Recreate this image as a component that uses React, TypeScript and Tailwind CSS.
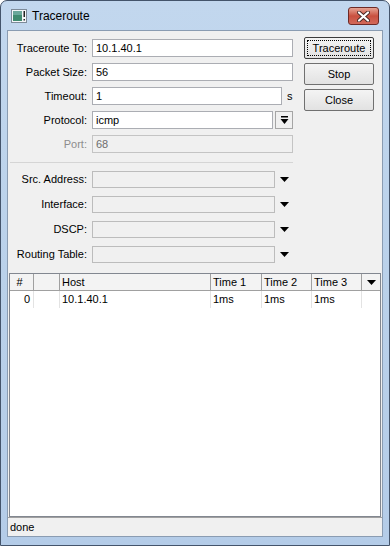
import React from "react";

const font = { fontFamily: '"Liberation Sans", Arial, sans-serif' };

function Field({ label, value, width, disabled, children }: { label: string; value?: string; width: string; disabled?: boolean; children?: React.ReactNode }) {
  return (
    <div className="flex h-[18px] items-center">
      <div className={`w-[79px] shrink-0 text-right text-[11px] ${disabled ? "text-[#8d8d8d]" : "text-black"}`}>{label}:</div>
      <div
        className={`ml-[5px] flex h-[18px] items-center border px-[3px] text-[11px] ${width} ${
          disabled ? "border-[#c4c4c4] bg-[#f0f0f0] text-[#6d6d6d]" : "border-[#abadb3] bg-white text-black"
        }`}
      >
        {value}
      </div>
      {children}
    </div>
  );
}

function DropField({ label }: { label: string }) {
  return (
    <div className="flex h-[17px] items-center">
      <div className="w-[79px] shrink-0 text-right text-[11px] text-black">{label}:</div>
      <div className="ml-[5px] h-[17px] w-[183px] border border-[#bcbcbc] bg-[#f0f0f0]" />
      <svg width="9" height="5" viewBox="0 0 9 5" className="ml-[5px]">
        <path d="M0 0H9L4.5 5Z" fill="#000" />
      </svg>
    </div>
  );
}

function Btn({ label, focused }: { label: string; focused?: boolean }) {
  return (
    <div
      className={`flex h-[22px] w-[70px] items-center justify-center rounded-[2px] border bg-gradient-to-b from-[#f4f4f4] to-[#e2e2e2] text-[11px] ${
        focused ? "border-[#3c3c3c]" : "border-[#707070]"
      }`}
    >
      {focused ? (
        <div className="flex h-[16px] w-[64px] items-center justify-center border border-dotted border-black">{label}</div>
      ) : (
        label
      )}
    </div>
  );
}

const cols = "grid grid-cols-[24px_26px_151px_51px_50px_50px_1fr]";

export default function App() {
  return (
    <div style={font} className="flex h-[546px] w-[390px] flex-col overflow-hidden rounded-t-[7px] border border-[#44546b] bg-gradient-to-b from-[#c2d7ee] via-[#bad1ea] to-[#b4cce8]">
      {/* title bar */}
      <div className="flex h-[29px] shrink-0 items-center pl-[10px] pr-[10px]">
        <svg width="16" height="14" viewBox="0 0 16 14">
          <rect x="0.5" y="0.5" width="15" height="13" fill="#f4f6f8" stroke="#7d8a98" />
          <rect x="2" y="2" width="9" height="10" fill="#3f8a6f" />
          <rect x="2" y="2" width="9" height="4" fill="#6aa79a" />
          <rect x="12.5" y="2" width="1.5" height="6" fill="#222" />
          <rect x="12.5" y="10" width="1.5" height="1.5" fill="#222" />
        </svg>
        <span className="ml-[5px] text-[12px] text-black">Traceroute</span>
        <div className="ml-auto mt-[1px] flex h-[18px] w-[31px] items-center justify-center rounded-[3px] border border-[#6e2a26] bg-gradient-to-b from-[#e5a394] via-[#c9503f] to-[#d2695a]">
          <svg width="13" height="11" viewBox="0 0 13 11">
            <path d="M2 1.5L11 9.5M11 1.5L2 9.5" stroke="#4a2a26" strokeWidth="4" strokeLinecap="round" />
            <path d="M2 1.5L11 9.5M11 1.5L2 9.5" stroke="#fff" strokeWidth="2.2" strokeLinecap="round" />
          </svg>
        </div>
      </div>

      {/* client area */}
      <div className="mx-[6px] flex min-h-0 flex-1 flex-col border border-[#8a9cb2] bg-[#f0f0f0]">
        <div className="flex items-start">
          <div className="flex flex-col gap-[6px] pt-[8px]">
            <Field label="Traceroute To" value="10.1.40.1" width="w-[201px]" />
            <Field label="Packet Size" value="56" width="w-[201px]" />
            <Field label="Timeout" value="1" width="w-[190px]">
              <span className="ml-[5px] text-[11px]">s</span>
            </Field>
            <Field label="Protocol" value="icmp" width="w-[181px]">
              <div className="ml-[2px] flex h-[18px] w-[18px] items-center justify-center border border-[#a5a5a5] bg-[#f0f0f0]">
                <svg width="9" height="9" viewBox="0 0 9 9">
                  <rect x="1" y="0" width="7" height="1.5" fill="#000" />
                  <path d="M0.5 3H8.5L4.5 8Z" fill="#000" />
                </svg>
              </div>
            </Field>
            <Field label="Port" value="68" width="w-[201px]" disabled />
          </div>
          <div className="ml-[11px] flex flex-col gap-[4px] pt-[6px]">
            <Btn label="Traceroute" focused />
            <Btn label="Stop" />
            <Btn label="Close" />
          </div>
        </div>

        <div className="ml-[2px] mt-[9px] h-px w-[283px] bg-[#d5d5d5]" />

        <div className="mt-[8px] flex flex-col gap-[8px]">
          <DropField label="Src. Address" />
          <DropField label="Interface" />
          <DropField label="DSCP" />
          <DropField label="Routing Table" />
        </div>

        {/* table */}
        <div className="mx-[1px] mt-[10px] flex min-h-0 flex-1 flex-col border border-[#828790] bg-white text-[11px]">
          <div className={`${cols} h-[17px] shrink-0 border-b border-[#a0a0a0] bg-[#f3f3f3]`}>
            <div className="flex items-center justify-center border-r border-[#a0a0a0] pr-[4px]">#</div>
            <div className="border-r border-[#a0a0a0]" />
            <div className="flex items-center border-r border-[#a0a0a0] pl-[2px]">Host</div>
            <div className="flex items-center border-r border-[#a0a0a0] pl-[2px]">Time 1</div>
            <div className="flex items-center border-r border-[#a0a0a0] pl-[2px]">Time 2</div>
            <div className="flex items-center border-r border-[#a0a0a0] pl-[2px]">Time 3</div>
            <div className="flex items-center justify-center">
              <svg width="9" height="5" viewBox="0 0 9 5">
                <path d="M0 0H9L4.5 5Z" fill="#000" />
              </svg>
            </div>
          </div>
          <div className={`${cols} h-[14px]`}>
            <div className="flex items-center justify-end border-r border-[#e3e3e3] pr-[3px]">0</div>
            <div className="border-r border-[#e3e3e3]" />
            <div className="flex items-center border-r border-[#e3e3e3] pl-[2px]">10.1.40.1</div>
            <div className="flex items-center border-r border-[#e3e3e3] pl-[2px]">1ms</div>
            <div className="flex items-center border-r border-[#e3e3e3] pl-[2px]">1ms</div>
            <div className="flex items-center border-r border-[#e3e3e3] pl-[2px]">1ms</div>
            <div />
          </div>
        </div>

        {/* status bar */}
        <div className="flex h-[19px] shrink-0 items-center border-t border-[#a0a0a0] pl-[2px] text-[11px]">done</div>
      </div>
      <div className="h-[8px] shrink-0" />
    </div>
  );
}
